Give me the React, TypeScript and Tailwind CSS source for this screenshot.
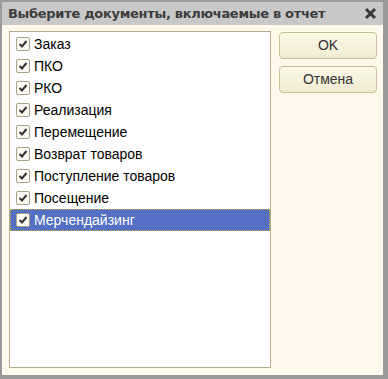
import React from 'react';

const items = [
  'Заказ',
  'ПКО',
  'РКО',
  'Реализация',
  'Перемещение',
  'Возврат товаров',
  'Поступление товаров',
  'Посещение',
  'Мерчендайзинг',
];

const CheckMark = () => (
  <span className="w-[14px] h-[14px] shrink-0 rounded-[2px] border border-[#a8a184] bg-[#fbfaf4] flex items-center justify-center">
    <svg width="10" height="10" viewBox="0 0 10 10">
      <path d="M1.5 5 L4 7.5 L8.5 2" fill="none" stroke="#333" strokeWidth="2" />
    </svg>
  </span>
);

const App: React.FC = () => {
  const selected = 'Мерчендайзинг';

  return (
    <div className="w-[388px] h-[379px] bg-[#9a9a9a] p-[2px] pr-[5px] pb-[4px] font-['Liberation_Sans',Arial,sans-serif]">
      <div className="h-full flex flex-col bg-[#fff9ec]">
        {/* заголовок */}
        <div className="h-[23px] shrink-0 bg-[#c8c8c8] flex items-center justify-between pl-[6px] pr-[6px]">
          <span className="text-[13px] font-bold text-[#3c3c3c] font-['DejaVu_Sans',Verdana,sans-serif] tracking-[-0.3px]">
            Выберите документы, включаемые в отчет
          </span>
          <svg width="13" height="13" viewBox="0 0 13 13">
            <path d="M2 2 L11 11 M11 2 L2 11" stroke="#3a3a3a" strokeWidth="3" />
          </svg>
        </div>

        <div className="flex-1 flex gap-[8px] pl-[7px] pr-[6px] pt-[6px] pb-[7px]">
          <ul className="w-[262px] h-full bg-white border border-[#b5ad8c] pt-[1px] px-0">
            {items.map((item) => (
              <li
                key={item}
                className={`h-[22px] flex items-center gap-[4px] pl-[5px] text-[14px] border border-dotted ${
                  item === selected
                    ? 'bg-[#5470c4] text-white border-[#d9a441]'
                    : 'text-black border-transparent'
                }`}
              >
                <CheckMark />
                <span>{item}</span>
              </li>
            ))}
          </ul>

          <div className="flex-1 flex flex-col gap-[7px] pt-[1px]">
            <button className="h-[27px] rounded-[4px] border border-[#c9c09a] bg-gradient-to-b from-[#faf7e6] to-[#f0ebd2] text-[14px] text-[#333]">
              OK
            </button>
            <button className="h-[27px] rounded-[4px] border border-[#c9c09a] bg-gradient-to-b from-[#faf7e6] to-[#f0ebd2] text-[14px] text-[#333]">
              Отмена
            </button>
          </div>
        </div>
      </div>
    </div>
  );
};

export default App;
